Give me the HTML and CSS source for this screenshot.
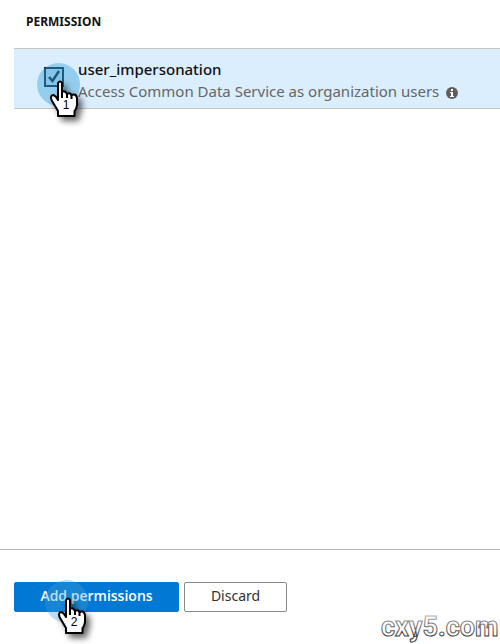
FILE: index.html
```html
<!DOCTYPE html>
<html lang="en">
<head>
<meta charset="utf-8">
<title>Request API permissions</title>
<link rel="stylesheet" href="styles.css">
</head>
<body>
<svg class="defs" aria-hidden="true">
  <symbol id="hand" viewBox="0 0 30 38">
    <path d="M8 3Q10 0 12 3V12Q15 10 17 14Q20 12 21.500 15Q26 13 27 18V25Q26 30 24.500 31V36H8V31L1.500 20Q0 15 3.500 15Q6 16 8 20Z" fill="#fff" stroke="#000" stroke-width="2" stroke-linejoin="round"/>
    <path d="M12 11V18M17 13V18M21.500 15V19" fill="none" stroke="#000" stroke-width="2"/>
  </symbol>
</svg>
<main class="panel">
  <section class="list">
    <h2 class="heading">PERMISSION</h2>
    <div class="row">
      <div class="check">
        <input type="checkbox" id="impersonation" checked>
        <span class="step"><svg class="hand"><use href="#hand"/></svg><span class="number">1</span></span>
      </div>
      <label class="text" for="impersonation">
        <span class="name">user_impersonation</span>
        <span class="description">Access Common Data Service as organization users
          <svg class="info" viewBox="0 0 12 12"><circle cx="6" cy="6" r="6" fill="#605e5c"/><path d="M5 2H7V4H5ZM4 5H7V9H8V10H4V9H5V6H4Z" fill="#fff"/></svg>
        </span>
      </label>
    </div>
  </section>
  <footer class="actions">
    <div class="add">
      <button type="button" class="button primary">Add permissions</button>
      <span class="step"><svg class="hand"><use href="#hand"/></svg><span class="number">2</span></span>
    </div>
    <button type="button" class="button">Discard</button>
    <svg class="watermark" viewBox="0 0 122 40">
      <defs><linearGradient id="ink" gradientUnits="userSpaceOnUse" x1="0" y1="7" x2="0" y2="34"><stop offset="0" stop-color="#ccc"/><stop offset="0.500" stop-color="#777"/><stop offset="1" stop-color="#333"/></linearGradient></defs>
      <text x="3" y="32">cxy5.com</text>
    </svg>
  </footer>
</main>
</body>
</html>
```
FILE: styles.css
```css
* { box-sizing: border-box; }
body {
  margin: 0;
  background: #fff;
  color: #111;
  font-family: "Noto Sans", "Open Sans", sans-serif;
}
.defs { position: absolute; width: 0; height: 0; }
.panel { display: flex; flex-direction: column; min-height: 100vh; }
.list { flex: 1; padding-left: 14px; }
.heading {
  margin: 0;
  padding: 12px 12px 16px;
  font: bold 12px/20px "Noto Sans", sans-serif;
}
.row {
  display: flex;
  gap: 14px;
  padding: 9px 0 6px 30px;
  border-top: 1px solid #c8c6c4;
  border-bottom: 1px solid #c8c6c4;
  background: #dbeefe;
}
.check { position: relative; width: 20px; padding-top: 9px; }
.check input {
  appearance: none;
  display: block;
  width: 20px;
  height: 20px;
  margin: 0;
  border: 2px solid #002038;
  background: #c6e4f8;
}
.check input:checked {
  background: #c0e0f6 url("data:image/svg+xml,%3Csvg xmlns='http://www.w3.org/2000/svg' viewBox='0 0 16 16'%3E%3Cpath d='M3 8L6.500 12L13 2' fill='none' stroke='%23001828' stroke-width='2.500'/%3E%3C/svg%3E") center / 16px 16px no-repeat;
}
.text { display: flex; flex-direction: column; white-space: nowrap; }
.name { font-size: 15px; line-height: 22px; font-weight: 500; }
.description { display: flex; align-items: center; gap: 7px; color: #666; font-size: 15px; line-height: 22px; }
.info { width: 12px; height: 12px; margin-top: 4px; }
.step {
  position: absolute;
  width: 43px;
  height: 43px;
  border-radius: 50%;
  background: rgba(65, 165, 220, 0.45);
  pointer-events: none;
}
.check .step { top: 5px; left: -7px; }
.hand {
  position: absolute;
  top: 17px;
  left: 13px;
  width: 30px;
  height: 38px;
  filter: drop-shadow(4px 4px 3px rgba(0, 0, 0, 0.6));
}
.number {
  position: absolute;
  top: 35px;
  left: 23px;
  width: 12px;
  color: #000;
  font: 12px/14px "Liberation Sans", sans-serif;
  text-align: center;
}
.actions {
  position: relative;
  display: flex;
  align-items: flex-start;
  gap: 5px;
  padding: 32px 14px;
  border-top: 1px solid #b5b5b5;
}
.add { position: relative; flex: 0 0 165px; }
.add .step { top: -2px; left: 31px; background: rgba(70, 160, 205, 0.35); }
.button {
  display: block;
  flex: 0 0 103px;
  height: 30px;
  padding: 0 0 3px;
  border: 1px solid #8a8886;
  border-radius: 2px;
  background: #fff;
  color: #323130;
  font: 14px/24px "Noto Sans", sans-serif;
}
.primary { width: 100%; border-color: #0078d4; background: #0078d4; color: #fff; font: 600 14px/24px "Open Sans", sans-serif; }
.watermark { position: absolute; right: 0; bottom: 0; width: 122px; height: 40px; }
.watermark text {
  fill: #fff;
  stroke: url(#ink);
  stroke-width: 1px;
  font: bold 27px Roboto, sans-serif;
}
```
